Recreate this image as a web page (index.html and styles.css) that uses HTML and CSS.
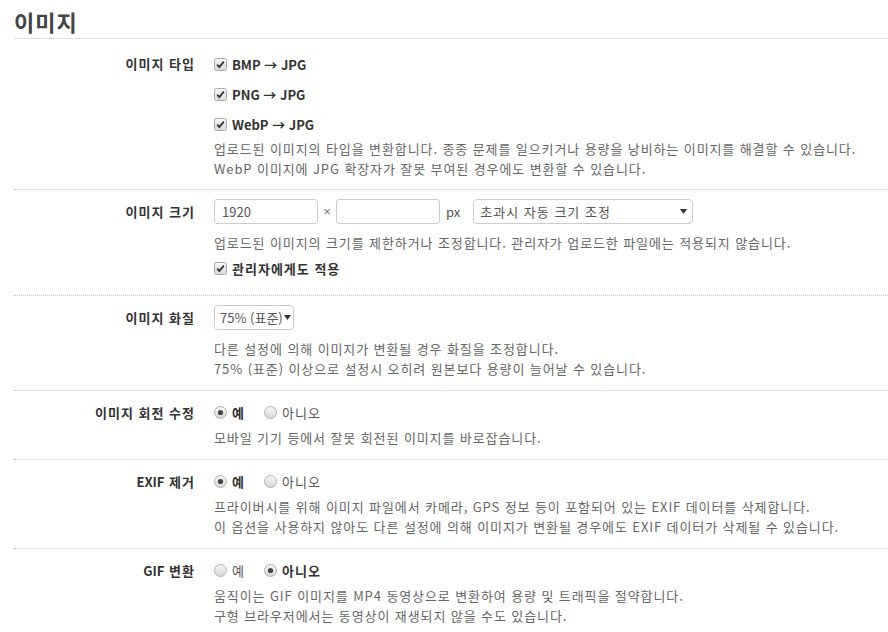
FILE: index.html
```html
<!DOCTYPE html>
<html lang="ko">
<head>
<meta charset="utf-8">
<title>이미지</title>
<link rel="stylesheet" href="styles.css">
</head>
<body>
<div class="page">
  <h2 class="title">이미지</h2>

  <div class="row">
    <div class="label lh-check">이미지 타입</div>
    <div class="controls">
      <label class="check-line"><svg class="cb" viewBox="0 0 13 13"><defs><linearGradient id="g1" x1="0" y1="0" x2="0" y2="1"><stop offset="0" stop-color="#f7f7f7"/><stop offset="1" stop-color="#dadada"/></linearGradient></defs><rect x="0.5" y="0.5" width="12" height="12" rx="2" fill="url(#g1)" stroke="#ababab"/><path d="M3.2 6.6 L5.4 9 L9.8 3.6" fill="none" stroke="#333" stroke-width="1.8"/></svg><b>BMP → JPG</b></label>
      <label class="check-line"><svg class="cb" viewBox="0 0 13 13"><rect x="0.5" y="0.5" width="12" height="12" rx="2" fill="url(#g1)" stroke="#ababab"/><path d="M3.2 6.6 L5.4 9 L9.8 3.6" fill="none" stroke="#333" stroke-width="1.8"/></svg><b>PNG → JPG</b></label>
      <label class="check-line"><svg class="cb" viewBox="0 0 13 13"><rect x="0.5" y="0.5" width="12" height="12" rx="2" fill="url(#g1)" stroke="#ababab"/><path d="M3.2 6.6 L5.4 9 L9.8 3.6" fill="none" stroke="#333" stroke-width="1.8"/></svg><b>WebP → JPG</b></label>
      <p class="help">업로드된 이미지의 타입을 변환합니다. 종종 문제를 일으키거나 용량을 낭비하는 이미지를 해결할 수 있습니다.<br>WebP 이미지에 JPG 확장자가 잘못 부여된 경우에도 변환할 수 있습니다.</p>
    </div>
  </div>

  <div class="row">
    <div class="label lh-input">이미지 크기</div>
    <div class="controls">
      <div class="input-line">
        <input class="text" type="text" value="1920">
        <span class="times">×</span>
        <input class="text" type="text" value="">
        <span class="unit">px</span>
        <span class="select wide"><span class="ko">초과시 자동 크기 조정</span><svg class="caret" viewBox="0 0 7 5"><path d="M0 0 H7 L3.5 5 Z" fill="#333"/></svg></span>
      </div>
      <p class="help gap">업로드된 이미지의 크기를 제한하거나 조정합니다. 관리자가 업로드한 파일에는 적용되지 않습니다.</p>
      <label class="check-line tall"><svg class="cb" viewBox="0 0 13 13"><rect x="0.5" y="0.5" width="12" height="12" rx="2" fill="url(#g1)" stroke="#ababab"/><path d="M3.2 6.6 L5.4 9 L9.8 3.6" fill="none" stroke="#333" stroke-width="1.8"/></svg><b class="ko">관리자에게도 적용</b></label>
    </div>
  </div>

  <div class="row">
    <div class="label lh-input">이미지 화질</div>
    <div class="controls">
      <div class="input-line">
        <span class="select small"><span>75% (표준)</span><svg class="caret" viewBox="0 0 7 5"><path d="M0 0 H7 L3.5 5 Z" fill="#333"/></svg></span>
      </div>
      <p class="help gap">다른 설정에 의해 이미지가 변환될 경우 화질을 조정합니다.<br>75% (표준) 이상으로 설정시 오히려 원본보다 용량이 늘어날 수 있습니다.</p>
    </div>
  </div>

  <div class="row">
    <div class="label lh-input">이미지 회전 수정</div>
    <div class="controls">
      <div class="radio-line">
        <label class="opt on"><svg class="rd" viewBox="0 0 13 13"><defs><linearGradient id="g2" x1="0" y1="0" x2="0" y2="1"><stop offset="0" stop-color="#f7f7f7"/><stop offset="1" stop-color="#d6d6d6"/></linearGradient></defs><circle cx="6.5" cy="6.5" r="6" fill="url(#g2)" stroke="#b0b0b0"/><circle cx="6.5" cy="6.5" r="2.6" fill="#444"/></svg><b>예</b></label>
        <label class="opt"><svg class="rd" viewBox="0 0 13 13"><circle cx="6.5" cy="6.5" r="6" fill="url(#g2)" stroke="#b0b0b0"/></svg><span>아니오</span></label>
      </div>
      <p class="help small-gap">모바일 기기 등에서 잘못 회전된 이미지를 바로잡습니다.</p>
    </div>
  </div>

  <div class="row">
    <div class="label lh-input"><span class="latin">EXIF</span> 제거</div>
    <div class="controls">
      <div class="radio-line">
        <label class="opt on"><svg class="rd" viewBox="0 0 13 13"><circle cx="6.5" cy="6.5" r="6" fill="url(#g2)" stroke="#b0b0b0"/><circle cx="6.5" cy="6.5" r="2.6" fill="#444"/></svg><b>예</b></label>
        <label class="opt"><svg class="rd" viewBox="0 0 13 13"><circle cx="6.5" cy="6.5" r="6" fill="url(#g2)" stroke="#b0b0b0"/></svg><span>아니오</span></label>
      </div>
      <p class="help small-gap">프라이버시를 위해 이미지 파일에서 카메라, GPS 정보 등이 포함되어 있는 EXIF 데이터를 삭제합니다.<br>이 옵션을 사용하지 않아도 다른 설정에 의해 이미지가 변환될 경우에도 EXIF 데이터가 삭제될 수 있습니다.</p>
    </div>
  </div>

  <div class="row">
    <div class="label lh-input"><span class="latin">GIF</span> 변환</div>
    <div class="controls">
      <div class="radio-line">
        <label class="opt"><svg class="rd" viewBox="0 0 13 13"><circle cx="6.5" cy="6.5" r="6" fill="url(#g2)" stroke="#b0b0b0"/></svg><span>예</span></label>
        <label class="opt on"><svg class="rd" viewBox="0 0 13 13"><circle cx="6.5" cy="6.5" r="6" fill="url(#g2)" stroke="#b0b0b0"/><circle cx="6.5" cy="6.5" r="2.6" fill="#444"/></svg><b>아니오</b></label>
      </div>
      <p class="help small-gap">움직이는 GIF 이미지를 MP4 동영상으로 변환하여 용량 및 트래픽을 절약합니다.<br>구형 브라우저에서는 동영상이 재생되지 않을 수도 있습니다.</p>
    </div>
  </div>
</div>
</body>
</html>
```

FILE: styles.css
```css
html, body {
  margin: 0;
  padding: 0;
  background: #fff;
}

body {
  font-family: "Noto Sans CJK KR", "Noto Sans", sans-serif;
  font-size: 13px;
  color: #333;
}

.page {
  padding-left: 14px;
  overflow: hidden;
}

.title {
  margin: 0;
  padding: 6px 0 2px;
  font-size: 22px;
  line-height: 30px;
  font-weight: bold;
  color: #444;
  letter-spacing: 1px;
  border-bottom: 1px solid #ddd;
}

.row {
  display: flex;
  padding: 9px 0 11px;
  border-bottom: 1px dotted #c8c8c8;
}

.row:first-of-type {
  padding-top: 10px;
  padding-bottom: 10px;
}

.row:last-child {
  border-bottom: 0;
}

.label {
  flex: none;
  width: 200px;
  padding-right: 19px;
  box-sizing: border-box;
  text-align: right;
  font-weight: bold;
  color: #333;
  letter-spacing: 1px;
  white-space: nowrap;
}

.latin {
  letter-spacing: 0;
}

.lh-check { line-height: 30px; }
.lh-input { line-height: 25px; }

.controls {
  flex: 1;
  min-width: 0;
}

.check-line {
  display: flex;
  align-items: center;
  height: 30px;
  gap: 5px;
  color: #333;
}

.check-line.tall { height: 31px; }

.ko {
  letter-spacing: 1px;
}

.cb, .rd {
  width: 13px;
  height: 13px;
  flex: none;
}

.help {
  margin: 0;
  line-height: 20px;
  color: #666;
  letter-spacing: 0.9px;
  white-space: nowrap;
}

.help.gap { margin-top: 9px; }
.help.small-gap { margin-top: 3px; }

.input-line {
  display: flex;
  align-items: center;
  height: 25px;
}

.text {
  box-sizing: border-box;
  width: 104px;
  height: 25px;
  margin: 0;
  padding: 0 7px;
  border: 1px solid #ccc;
  border-radius: 3px;
  font-family: "Noto Sans CJK KR", "Noto Sans", sans-serif;
  font-size: 13px;
  color: #555;
  background: #fff;
  outline: none;
}

.times {
  width: 18px;
  text-align: center;
  font-family: "Liberation Sans", sans-serif;
  color: #777;
}

.unit {
  margin: 0 13px 0 6px;
  color: #555;
}

.select {
  box-sizing: border-box;
  height: 25px;
  display: flex;
  align-items: center;
  justify-content: space-between;
  border: 1px solid #ccc;
  border-radius: 4px;
  color: #555;
  background: #fff;
  white-space: nowrap;
}

.select.wide {
  width: 220px;
  padding: 0 5px 0 6px;
}

.select.small {
  width: 80px;
  padding: 0 2px 0 5px;
}

.caret {
  width: 7px;
  height: 5px;
  flex: none;
}

.radio-line {
  display: flex;
  align-items: center;
  height: 25px;
}

.opt {
  display: inline-flex;
  align-items: center;
  gap: 5px;
  color: #555;
  letter-spacing: 1px;
}

.opt:first-child {
  width: 50px;
}

.opt.on {
  color: #333;
}
```
